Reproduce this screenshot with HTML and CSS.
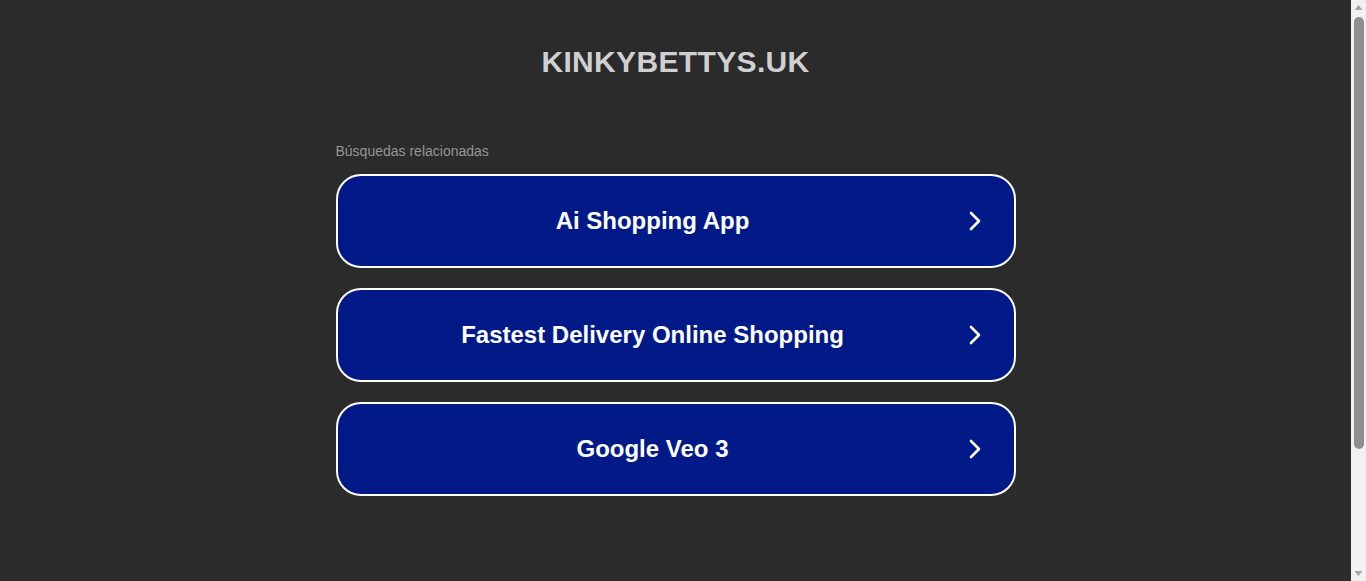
FILE: index.html
```html
<!DOCTYPE html>
<html lang="es">
<head>
<meta charset="utf-8">
<title>kinkybettys.uk</title>
<link rel="stylesheet" href="styles.css">
</head>
<body>
<div class="page">
  <header class="header">
    <h1 class="title">KINKYBETTYS.UK</h1>
  </header>
  <main class="content">
    <p class="label">Búsquedas relacionadas</p>
    <ul class="links">
      <li><a class="link" href="#"><span class="link-text">Ai Shopping App</span><svg class="chev" width="16" height="22" viewBox="0 0 16 22"><polyline points="3,3 11,11 3,19" fill="none" stroke="#fff" stroke-width="2.6" stroke-linecap="round" stroke-linejoin="round"/></svg></a></li>
      <li><a class="link" href="#"><span class="link-text">Fastest Delivery Online Shopping</span><svg class="chev" width="16" height="22" viewBox="0 0 16 22"><polyline points="3,3 11,11 3,19" fill="none" stroke="#fff" stroke-width="2.6" stroke-linecap="round" stroke-linejoin="round"/></svg></a></li>
      <li><a class="link" href="#"><span class="link-text">Google Veo 3</span><svg class="chev" width="16" height="22" viewBox="0 0 16 22"><polyline points="3,3 11,11 3,19" fill="none" stroke="#fff" stroke-width="2.6" stroke-linecap="round" stroke-linejoin="round"/></svg></a></li>
    </ul>
  </main>
</div>
<div class="scrollbar" aria-hidden="true">
  <svg class="sb-arrow" width="15" height="15" viewBox="0 0 15 15"><polygon points="3.5,10 7.5,5 11.5,10" fill="#a3a3a3"/></svg>
  <div class="sb-track"><div class="sb-thumb"></div></div>
  <svg class="sb-arrow" width="15" height="15" viewBox="0 0 15 15"><polygon points="3.5,5 7.5,10 11.5,5" fill="#a3a3a3"/></svg>
</div>
</body>
</html>
```

FILE: styles.css
```css
html, body {
  margin: 0;
  padding: 0;
  background: #2b2b2b;
}
body {
  font-family: "Liberation Sans", Arial, sans-serif;
}
.page {
  width: calc(100% - 15px);
  min-height: 741px;
  box-sizing: border-box;
  padding-top: 45px;
}
.header {
  text-align: center;
}
.title {
  margin: 0;
  font-size: 30px;
  line-height: 34px;
  font-weight: 700;
  letter-spacing: 0.35px;
  color: #d0d0d3;
}
.content {
  width: 680px;
  margin: 64px auto 0;
}
.label {
  margin: 0 0 15px 0;
  font-size: 14px;
  line-height: 16px;
  color: #959595;
}
.links {
  list-style: none;
  margin: 0;
  padding: 0;
  display: flex;
  flex-direction: column;
  gap: 20px;
}
.link {
  display: flex;
  align-items: center;
  height: 94px;
  box-sizing: border-box;
  border: 2px solid #ffffff;
  border-radius: 25px;
  background: #021a88;
  color: #ffffff;
  text-decoration: none;
  padding: 0 30px 0 0;
}
.link-text {
  flex: 1;
  text-align: center;
  font-size: 24px;
  font-weight: 700;
}
.chev {
  display: block;
}
.scrollbar {
  position: fixed;
  top: 0;
  right: 0;
  width: 15px;
  height: 100vh;
  background: #f1f1f1;
  display: flex;
  flex-direction: column;
}
.sb-arrow {
  display: block;
  flex: none;
}
.sb-track {
  flex: 1;
  padding: 2px 2px 0 3px;
}
.sb-thumb {
  height: 432px;
  background: #8f8f8f;
  border-radius: 5px;
}
```
